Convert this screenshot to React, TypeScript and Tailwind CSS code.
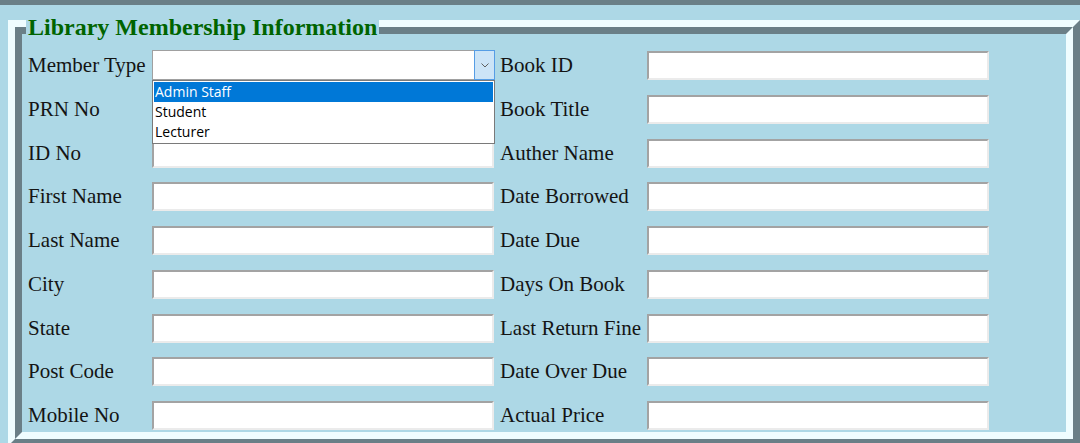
import React from 'react';

const leftLabels = ['Member Type', 'PRN No', 'ID No', 'First Name', 'Last Name', 'City', 'State', 'Post Code', 'Mobile No'];
const rightLabels = ['Book ID', 'Book Title', 'Auther Name', 'Date Borrowed', 'Date Due', 'Days On Book', 'Last Return Fine', 'Date Over Due', 'Actual Price'];

function TextBox() {
  return (
    <div className="h-[29px] w-[342px] bg-white border-2 border-t-[#a3a3a3] border-l-[#a3a3a3] border-b-[#ebebeb] border-r-[#ebebeb]" />
  );
}

function MemberSelect() {
  return (
    <div className="relative h-[30px] w-[343px]">
      <div className="flex h-full w-full bg-white border border-[#a0a0a0]">
        <div className="flex-1" />
        <div className="flex w-[21px] items-center justify-center bg-[#cce4f7] border border-[#569de5] -m-px">
          <svg width="8" height="5" viewBox="0 0 8 5">
            <polyline points="0.5,0.5 4,4 7.5,0.5" fill="none" stroke="#606060" strokeWidth="1" />
          </svg>
        </div>
      </div>
      <div className="absolute left-0 top-[30px] z-10 w-[343px] bg-white border border-[#7a7a7a] p-px" style={{ fontFamily: '"Open Sans", "Noto Sans", sans-serif' }}>
        <div className="h-[20px] bg-[#0078d7] pl-[1px] text-[14px] leading-[20px] text-white">Admin Staff</div>
        <div className="h-[20px] pl-[1px] text-[14px] leading-[20px] text-black">Student</div>
        <div className="h-[20px] pl-[1px] text-[14px] leading-[20px] text-black">Lecturer</div>
      </div>
    </div>
  );
}

export default function App() {
  return (
    <div className="h-[443px] overflow-hidden bg-[#add8e6]" style={{ fontFamily: '"Liberation Serif", "Times New Roman", serif' }}>
      <div className="h-[5px] bg-[#6a7f87]" />
      <div className="pl-[8px] pt-[15px]">
        {/* fieldset, ridge border */}
        <div className="relative h-[426px] border-[7px] border-t-[#effdff] border-l-[#effdff] border-r-[#6a7f87] border-b-[#6a7f87]">
          <div className="absolute left-[11px] top-[-14px] z-10 bg-[#add8e6] px-[2px] text-[24px] font-bold leading-[28px] text-[#006400]">
            Library Membership Information
          </div>
          <div className="h-full border-[7px] border-t-[#6a7f87] border-l-[#6a7f87] border-r-[#effdff] border-b-[#effdff] bg-[#add8e6] pl-[6px] pt-[16px]">
            <div className="grid grid-cols-[124px_342px_153px_342px] gap-y-[14.75px] items-center text-[21px] text-[#141414]">
              {leftLabels.map((l, i) => (
                <React.Fragment key={l}>
                  <div className="whitespace-nowrap leading-[29px]">{l}</div>
                  <div className="relative">{i === 0 ? <MemberSelect /> : <TextBox />}</div>
                  <div className="whitespace-nowrap pl-[6px] leading-[29px]">{rightLabels[i]}</div>
                  <TextBox />
                </React.Fragment>
              ))}
            </div>
          </div>
        </div>
      </div>
    </div>
  );
}
